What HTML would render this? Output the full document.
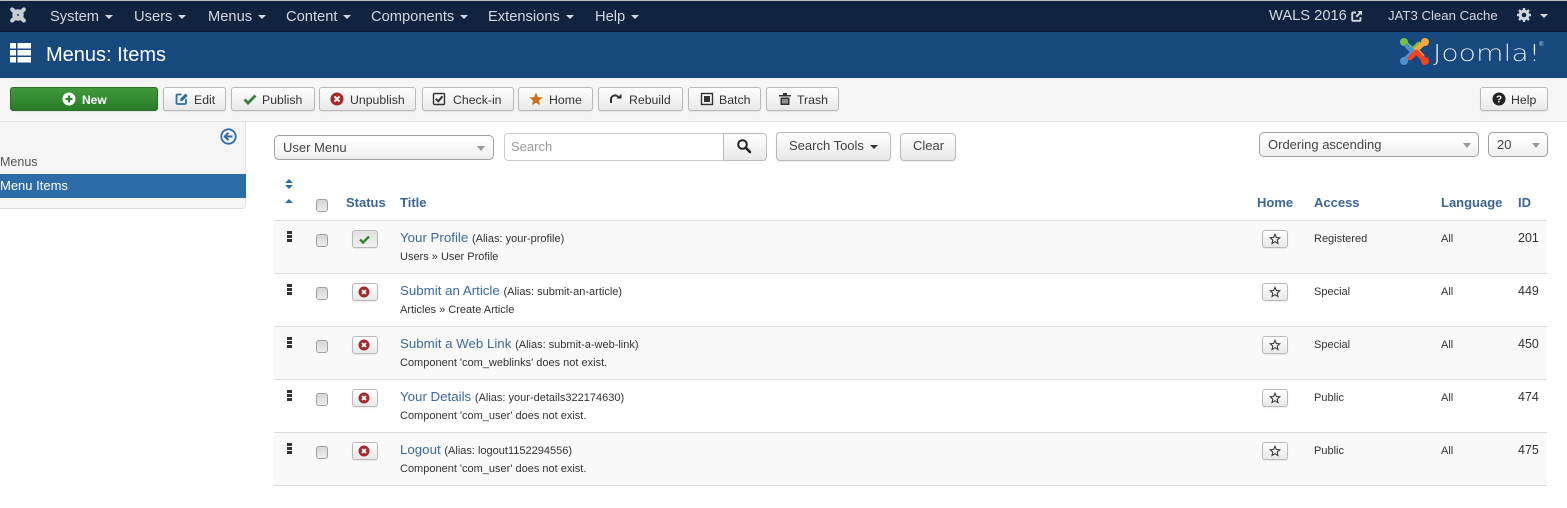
<!DOCTYPE html>
<html><head><meta charset="utf-8"><title>Menus: Items</title>
<style>
*{box-sizing:border-box}
html,body{margin:0;padding:0;background:#fff}
body{width:1567px;height:508px;overflow:hidden;position:relative;font-family:"Liberation Sans",sans-serif;color:#333}
.a{position:absolute;white-space:nowrap}
.bx{position:absolute}
.nav{font-size:14.7px;color:#d3d8df;top:8px;line-height:18px}
.nav i{display:inline-block;width:0;height:0;border:4px solid transparent;border-top:4px solid #d3d8df;border-bottom:0;margin-left:6px;vertical-align:2px}
.btn{position:absolute;top:87px;height:24px;border:1px solid #b9b9b9;border-radius:3px;background:linear-gradient(#fff,#e8e8e8);font-size:12.3px;line-height:24px;color:#333;white-space:nowrap;box-shadow:0 1px 1px rgba(0,0,0,.08)}
.btn span{position:absolute;top:0}
.btn svg{position:absolute;top:4px}
.sel{position:absolute;border:1px solid #a0a0a0;border-radius:5px;background:linear-gradient(#fff 20%,#eee);font-size:13px;color:#444}
.sel span{position:absolute;left:8px;top:3px;line-height:18px}
.sel i{position:absolute;top:10px;width:0;height:0;border:4px solid transparent;border-top:5px solid #999;border-bottom:0}
.h{font-size:13px;font-weight:bold;color:#3c6594;top:195px;line-height:15px}
.row{position:absolute;left:274px;width:1273px;height:53px;border-bottom:1px solid #ddd}
.ttl{font-size:13.3px;color:#3b6a9a}
.al{font-size:11px;color:#333}
.sub{font-size:11px;color:#333;line-height:13px;margin-top:1px}
.cell{font-size:11px;color:#333;line-height:13px;margin-top:1px}
.idc{font-size:12.5px;line-height:15px;margin-top:1px}
.sb{position:absolute;left:352px;width:26px;height:18px;border:1px solid #b9b9b9;border-radius:3px;background:linear-gradient(#fff,#e8e8e8);box-shadow:0 1px 1px rgba(0,0,0,.08)}
.hb{position:absolute;left:1262px;width:26px;height:18px;border:1px solid #b9b9b9;border-radius:3px;background:linear-gradient(#fff,#e8e8e8);box-shadow:0 1px 1px rgba(0,0,0,.08)}
.ck{position:absolute;width:12px;height:13px;border:1px solid #a0a0a0;border-radius:3px;background:linear-gradient(#d6d6d6,#ececec)}
.dots{position:absolute;left:287px;width:5px;height:11px;background:repeating-linear-gradient(#333 0,#333 3px,transparent 3px,transparent 4px)}
</style></head><body>

<div class="bx" style="left:0;top:0;width:1567px;height:1px;background:#b9bdc2"></div>
<div class="bx" style="left:0;top:1px;width:1567px;height:31px;background:#10233f;border-bottom:1px solid #0b1a30"></div>
<div class="bx" style="left:0;top:32px;width:1567px;height:46px;background:#17497f"></div>
<div class="bx" style="left:0;top:78px;width:1567px;height:44px;background:#f5f5f5;border-bottom:1px solid #e2e2e2"></div>

<svg class="bx" style="left:9px;top:6px" width="18" height="18" viewBox="0 0 18 18"><g fill="none" stroke="#c8cdd3" stroke-width="4.2" stroke-linecap="round"><path d="M3.200 3.500 14.800 14.500M14.800 3.500 3.200 14.500"/></g><circle cx="9" cy="9" r="4.200" fill="none" stroke="#c8cdd3" stroke-width="3"/><circle cx="9" cy="9" r="1" fill="#2a3a52"/></svg>

<div class="a nav" style="left:50px">System<i></i></div>
<div class="a nav" style="left:134px">Users<i></i></div>
<div class="a nav" style="left:208px">Menus<i></i></div>
<div class="a nav" style="left:286px">Content<i></i></div>
<div class="a nav" style="left:371px">Components<i></i></div>
<div class="a nav" style="left:488px">Extensions<i></i></div>
<div class="a nav" style="left:595px">Help<i></i></div>

<div class="a nav" style="left:1269px;top:7px">WALS 2016</div>
<svg class="bx" style="left:1351px;top:10px" width="12" height="12" viewBox="0 0 12 12"><path d="M5 2.500H2.200A1 1 0 0 0 1.200 3.500V9.800A1 1 0 0 0 2.200 10.800H8.500A1 1 0 0 0 9.500 9.800V7.200" fill="none" stroke="#d3d8df" stroke-width="1.900"/><path d="M6.500 1H11V5.500L9.400 4 6 7.500 4.500 6 8 2.600Z" fill="#d3d8df"/></svg>
<div class="a nav" style="left:1388px;top:7px;font-size:13.2px">JAT3 Clean Cache</div>
<svg class="bx" style="left:1517px;top:8px" width="14" height="14" viewBox="0 0 14 14"><circle cx="7" cy="7" r="3.800" fill="none" stroke="#d3d8df" stroke-width="3"/><g stroke="#d3d8df" stroke-width="2.400"><path d="M7 0V3M7 11V14M0 7H3M11 7H14M2 2 4 4M10 10 12 12M12 2 10 4M4 10 2 12"/></g></svg>
<div class="bx" style="left:1540px;top:14px;width:0;height:0;border:4px solid transparent;border-top-color:#d3d8df;border-bottom:0"></div>

<svg class="bx" style="left:10px;top:43px" width="21" height="20" viewBox="0 0 21 20" fill="#fff"><rect x="0" y="0" width="6" height="5.500"/><rect x="7.500" y="0" width="13.500" height="5.500"/><rect x="0" y="7" width="6" height="5.500"/><rect x="7.500" y="7" width="13.500" height="5.500"/><rect x="0" y="14" width="6" height="5.500"/><rect x="7.500" y="14" width="13.500" height="5.500"/></svg>
<div class="a" style="left:46px;top:43px;font-size:20px;line-height:24px;color:#fff">Menus: Items</div>

<svg class="bx" style="left:1399px;top:36px" width="31" height="30" viewBox="0 0 31 30" fill="none" stroke-width="4.800" stroke-linecap="round" stroke-linejoin="round">
<path d="M5 6 13.500 14 20 8" stroke="#7ac143"/><circle cx="5" cy="6" r="4" fill="#7ac143" stroke="none"/>
<path d="M26 6 17 14 23 20" stroke="#f9a541"/><circle cx="26" cy="6" r="4" fill="#f9a541" stroke="none"/>
<path d="M5 25 14 16 8 10" stroke="#5091cd"/><circle cx="5" cy="25" r="4" fill="#5091cd" stroke="none"/>
<path d="M26 25 17.500 16 11 22" stroke="#f44321"/><circle cx="26" cy="25" r="4" fill="#f44321" stroke="none"/>
</svg>
<div class="a" style="left:1433px;top:39px;font-family:'DejaVu Sans',sans-serif;font-size:23px;font-weight:200;line-height:30px;color:#fff;transform-origin:left center;transform:scaleX(1.230);-webkit-text-stroke:.15px #17497f">Joomla!</div>
<div class="a" style="left:1539px;top:41px;font-size:6px;line-height:8px;color:#cfd8e4">®</div>

<!-- toolbar -->
<div class="btn" style="left:10px;width:148px;background:linear-gradient(#409a3a,#2a7c29);border-color:#2c6e2a;color:#fff;font-weight:bold;font-size:12px"><svg style="left:51px" width="14" height="14" viewBox="0 0 14 14"><circle cx="7" cy="7" r="6.500" fill="#fff"/><path d="M3.500 7H10.500M7 3.500V10.500" stroke="#2f8530" stroke-width="2.200"/></svg><span style="left:71px">New</span></div>
<div class="btn" style="left:163px;width:63px"><svg style="left:11px" width="14" height="14" viewBox="0 0 14 14"><path d="M6.500 2.500H2.500A1 1 0 0 0 1.500 3.500V11A1 1 0 0 0 2.500 12H10A1 1 0 0 0 11 11V7" fill="none" stroke="#2f6ea5" stroke-width="1.800"/><path d="M5 9.200 5.500 6.500 10.500 1.500 12.700 3.700 7.700 8.700Z" fill="#2f6ea5"/></svg><span style="left:30px">Edit</span></div>
<div class="btn" style="left:231px;width:84px"><svg style="left:11px" width="14" height="14" viewBox="0 0 14 14"><path d="M1.500 7.500 5 11 12.500 3.500" fill="none" stroke="#378137" stroke-width="2.800"/></svg><span style="left:30px">Publish</span></div>
<div class="btn" style="left:319px;width:97px"><svg style="left:10px" width="14" height="14" viewBox="0 0 14 14"><circle cx="7" cy="7" r="6.500" fill="#a62a2a"/><path d="M4.500 4.500 9.500 9.500M9.500 4.500 4.500 9.500" stroke="#fff" stroke-width="2"/></svg><span style="left:30px">Unpublish</span></div>
<div class="btn" style="left:422px;width:92px"><svg style="left:9px" width="14" height="14" viewBox="0 0 14 14"><rect x="1.500" y="1.500" width="11" height="11" rx="1" fill="none" stroke="#333" stroke-width="1.400"/><path d="M3.800 6.800 6.300 9.300 10.500 4.200" fill="none" stroke="#333" stroke-width="2"/></svg><span style="left:30px">Check-in</span></div>
<div class="btn" style="left:518px;width:75px"><svg style="left:10px" width="14" height="14" viewBox="0 0 14 14"><path d="M7 .8 8.900 5 13.500 5.500 10 8.600 11 13.200 7 10.800 3 13.200 4 8.600 .5 5.500 5.100 5Z" fill="#c9721c"/></svg><span style="left:30px">Home</span></div>
<div class="btn" style="left:598px;width:85px"><svg style="left:10px" width="14" height="14" viewBox="0 0 14 14"><path d="M2 11V7.500A4 4 0 0 1 9.500 5.500" fill="none" stroke="#333" stroke-width="2"/><path d="M7.500 6.500H12.500V1.800Z" fill="#333"/></svg><span style="left:30px">Rebuild</span></div>
<div class="btn" style="left:688px;width:73px"><svg style="left:11px" width="14" height="14" viewBox="0 0 14 14"><rect x="1.500" y="1.500" width="11" height="11" fill="none" stroke="#333" stroke-width="1.400"/><rect x="4" y="4" width="6" height="6" fill="#333"/></svg><span style="left:30px">Batch</span></div>
<div class="btn" style="left:766px;width:73px"><svg style="left:11px" width="14" height="14" viewBox="0 0 14 14"><path d="M1 3H13V4.500H1ZM5 1H9V3H5Z" fill="#333"/><path d="M2.500 5.500H11.500V13H2.500Z" fill="#333"/><path d="M5 7V11.500M7 7V11.500M9 7V11.500" stroke="#eee" stroke-width="1"/></svg><span style="left:30px">Trash</span></div>
<div class="btn" style="left:1480px;width:68px"><svg style="left:11px" width="14" height="14" viewBox="0 0 14 14"><circle cx="7" cy="7" r="6.500" fill="#222"/><text x="7" y="10.500" text-anchor="middle" font-size="10" font-weight="bold" fill="#fff" font-family="Liberation Sans">?</text></svg><span style="left:30px">Help</span></div>

<!-- sidebar -->
<div class="bx" style="left:0;top:122px;width:246px;height:87px;background:#f5f5f5;border-right:1px solid #e3e3e3;border-bottom:1px solid #ddd;border-bottom-right-radius:4px"></div>
<svg class="bx" style="left:220px;top:128px" width="17" height="17" viewBox="0 0 17 17"><circle cx="8.500" cy="8.500" r="7.200" fill="none" stroke="#2f6ea5" stroke-width="1.800"/><path d="M12.500 8.500H5.500M8.500 4.800 4.800 8.500 8.500 12.200" fill="none" stroke="#2f6ea5" stroke-width="2"/></svg>
<div class="a" style="left:0;top:155px;font-size:12.500px;line-height:15px;color:#555">Menus</div>
<div class="bx" style="left:0;top:174px;width:246px;height:24px;background:#2d6ca6"></div>
<div class="a" style="left:0;top:178px;font-size:13px;line-height:15px;color:#fff">Menu Items</div>

<!-- filters -->
<div class="sel" style="left:274px;top:135px;width:220px;height:25px"><span>User Menu</span><i style="left:202px"></i></div>
<div class="bx" style="left:504px;top:133px;width:220px;height:28px;border:1px solid #ccc;border-right:0;border-radius:4px 0 0 4px;background:#fff"></div>
<div class="a" style="left:511px;top:139px;font-size:13px;line-height:15px;color:#999">Search</div>
<div class="bx" style="left:723px;top:133px;width:44px;height:28px;border:1px solid #bbb;border-radius:0 4px 4px 0;background:linear-gradient(#fff,#e8e8e8)"></div>
<svg class="bx" style="left:736px;top:138px" width="16" height="16" viewBox="0 0 16 16"><circle cx="6.500" cy="6.500" r="4.300" fill="none" stroke="#222" stroke-width="2"/><path d="M9.800 9.800 14 14" stroke="#222" stroke-width="2.600" stroke-linecap="round"/></svg>
<div class="btn" style="left:776px;top:132px;width:115px;height:29px;font-size:13px;line-height:25px;border-radius:4px;color:#444"><span style="left:12px">Search Tools</span><i style="position:absolute;left:93px;top:12px;width:0;height:0;border:4px solid transparent;border-top-color:#333;border-bottom:0"></i></div>
<div class="btn" style="left:900px;top:133px;width:56px;height:28px;font-size:13px;line-height:24px;border-radius:4px;color:#444"><span style="left:12px">Clear</span></div>
<div class="sel" style="left:1259px;top:132px;width:220px;height:25px"><span>Ordering ascending</span><i style="left:211px;margin-left:-8px"></i></div>
<div class="sel" style="left:1488px;top:132px;width:60px;height:25px"><span>20</span><i style="left:43px"></i></div>

<!-- table head -->
<svg class="bx" style="left:284px;top:179px" width="10" height="28" viewBox="0 0 10 28" fill="#2f6ea5"><path d="M5 0 9 4H1ZM5 10 1 6H9Z"/><path d="M5 20 9 24H1Z"/></svg>
<div class="ck" style="left:316px;top:199px"></div>
<div class="a h" style="left:346px">Status</div>
<div class="a h" style="left:400px">Title</div>
<div class="a h" style="left:1257px">Home</div>
<div class="a h" style="left:1314px">Access</div>
<div class="a h" style="left:1441px">Language</div>
<div class="a h" style="left:1518px">ID</div>
<div class="bx" style="left:274px;top:220px;width:1273px;height:1px;background:#ddd"></div>

<!-- rows -->
<div class="row" style="top:221px;background:#f9f9f9"></div>
<div class="row" style="top:274px;background:#fff"></div>
<div class="row" style="top:327px;background:#f9f9f9"></div>
<div class="row" style="top:380px;background:#fff"></div>
<div class="row" style="top:433px;background:#f9f9f9"></div>

<div class="dots" style="top:231px"></div><div class="ck" style="left:316px;top:234px"></div>
<div class="sb" style="top:230px;background:linear-gradient(#e2e2e2,#f0f0f0)"><svg class="bx" style="left:5px;top:2px" width="13" height="12" viewBox="0 0 13 12"><path d="M2 6.500 5 9.500 11 3.500" fill="none" stroke="#378137" stroke-width="2.400"/></svg></div>
<div class="a ttl" style="left:400px;top:230px"><span>Your Profile</span> <span class="al">(Alias: your-profile)</span></div>
<div class="a sub" style="left:400px;top:250px">Users » User Profile</div>
<div class="hb" style="top:230px"><svg class="bx" style="left:6px;top:2px" width="12" height="12" viewBox="0 0 14 14"><path d="M7 1.500 8.600 5.200 12.600 5.600 9.600 8.300 10.500 12.300 7 10.200 3.500 12.300 4.400 8.300 1.400 5.600 5.400 5.200Z" fill="none" stroke="#333" stroke-width="1.200"/></svg></div>
<div class="a cell" style="left:1314px;top:232px">Registered</div>
<div class="a cell" style="left:1441px;top:232px">All</div>
<div class="a idc" style="left:1518px;top:230px">201</div>

<div class="dots" style="top:284px"></div><div class="ck" style="left:316px;top:287px"></div>
<div class="sb" style="top:283px"><svg class="bx" style="left:4px;top:1px" width="14" height="14" viewBox="0 0 14 14"><circle cx="7" cy="7" r="5.500" fill="#a62a2a"/><path d="M5 5 9 9M9 5 5 9" stroke="#fff" stroke-width="1.800"/></svg></div>
<div class="a ttl" style="left:400px;top:283px"><span>Submit an Article</span> <span class="al">(Alias: submit-an-article)</span></div>
<div class="a sub" style="left:400px;top:303px">Articles » Create Article</div>
<div class="hb" style="top:283px"><svg class="bx" style="left:6px;top:2px" width="12" height="12" viewBox="0 0 14 14"><path d="M7 1.500 8.600 5.200 12.600 5.600 9.600 8.300 10.500 12.300 7 10.200 3.500 12.300 4.400 8.300 1.400 5.600 5.400 5.200Z" fill="none" stroke="#333" stroke-width="1.200"/></svg></div>
<div class="a cell" style="left:1314px;top:285px">Special</div>
<div class="a cell" style="left:1441px;top:285px">All</div>
<div class="a idc" style="left:1518px;top:283px">449</div>

<div class="dots" style="top:337px"></div><div class="ck" style="left:316px;top:340px"></div>
<div class="sb" style="top:336px"><svg class="bx" style="left:4px;top:1px" width="14" height="14" viewBox="0 0 14 14"><circle cx="7" cy="7" r="5.500" fill="#a62a2a"/><path d="M5 5 9 9M9 5 5 9" stroke="#fff" stroke-width="1.800"/></svg></div>
<div class="a ttl" style="left:400px;top:336px"><span>Submit a Web Link</span> <span class="al">(Alias: submit-a-web-link)</span></div>
<div class="a sub" style="left:400px;top:356px">Component 'com_weblinks' does not exist.</div>
<div class="hb" style="top:336px"><svg class="bx" style="left:6px;top:2px" width="12" height="12" viewBox="0 0 14 14"><path d="M7 1.500 8.600 5.200 12.600 5.600 9.600 8.300 10.500 12.300 7 10.200 3.500 12.300 4.400 8.300 1.400 5.600 5.400 5.200Z" fill="none" stroke="#333" stroke-width="1.200"/></svg></div>
<div class="a cell" style="left:1314px;top:338px">Special</div>
<div class="a cell" style="left:1441px;top:338px">All</div>
<div class="a idc" style="left:1518px;top:336px">450</div>

<div class="dots" style="top:390px"></div><div class="ck" style="left:316px;top:393px"></div>
<div class="sb" style="top:389px"><svg class="bx" style="left:4px;top:1px" width="14" height="14" viewBox="0 0 14 14"><circle cx="7" cy="7" r="5.500" fill="#a62a2a"/><path d="M5 5 9 9M9 5 5 9" stroke="#fff" stroke-width="1.800"/></svg></div>
<div class="a ttl" style="left:400px;top:389px"><span>Your Details</span> <span class="al">(Alias: your-details322174630)</span></div>
<div class="a sub" style="left:400px;top:409px">Component 'com_user' does not exist.</div>
<div class="hb" style="top:389px"><svg class="bx" style="left:6px;top:2px" width="12" height="12" viewBox="0 0 14 14"><path d="M7 1.500 8.600 5.200 12.600 5.600 9.600 8.300 10.500 12.300 7 10.200 3.500 12.300 4.400 8.300 1.400 5.600 5.400 5.200Z" fill="none" stroke="#333" stroke-width="1.200"/></svg></div>
<div class="a cell" style="left:1314px;top:391px">Public</div>
<div class="a cell" style="left:1441px;top:391px">All</div>
<div class="a idc" style="left:1518px;top:389px">474</div>

<div class="dots" style="top:443px"></div><div class="ck" style="left:316px;top:446px"></div>
<div class="sb" style="top:442px"><svg class="bx" style="left:4px;top:1px" width="14" height="14" viewBox="0 0 14 14"><circle cx="7" cy="7" r="5.500" fill="#a62a2a"/><path d="M5 5 9 9M9 5 5 9" stroke="#fff" stroke-width="1.800"/></svg></div>
<div class="a ttl" style="left:400px;top:442px"><span>Logout</span> <span class="al">(Alias: logout1152294556)</span></div>
<div class="a sub" style="left:400px;top:462px">Component 'com_user' does not exist.</div>
<div class="hb" style="top:442px"><svg class="bx" style="left:6px;top:2px" width="12" height="12" viewBox="0 0 14 14"><path d="M7 1.500 8.600 5.200 12.600 5.600 9.600 8.300 10.500 12.300 7 10.200 3.500 12.300 4.400 8.300 1.400 5.600 5.400 5.200Z" fill="none" stroke="#333" stroke-width="1.200"/></svg></div>
<div class="a cell" style="left:1314px;top:444px">Public</div>
<div class="a cell" style="left:1441px;top:444px">All</div>
<div class="a idc" style="left:1518px;top:442px">475</div>

</body></html>
